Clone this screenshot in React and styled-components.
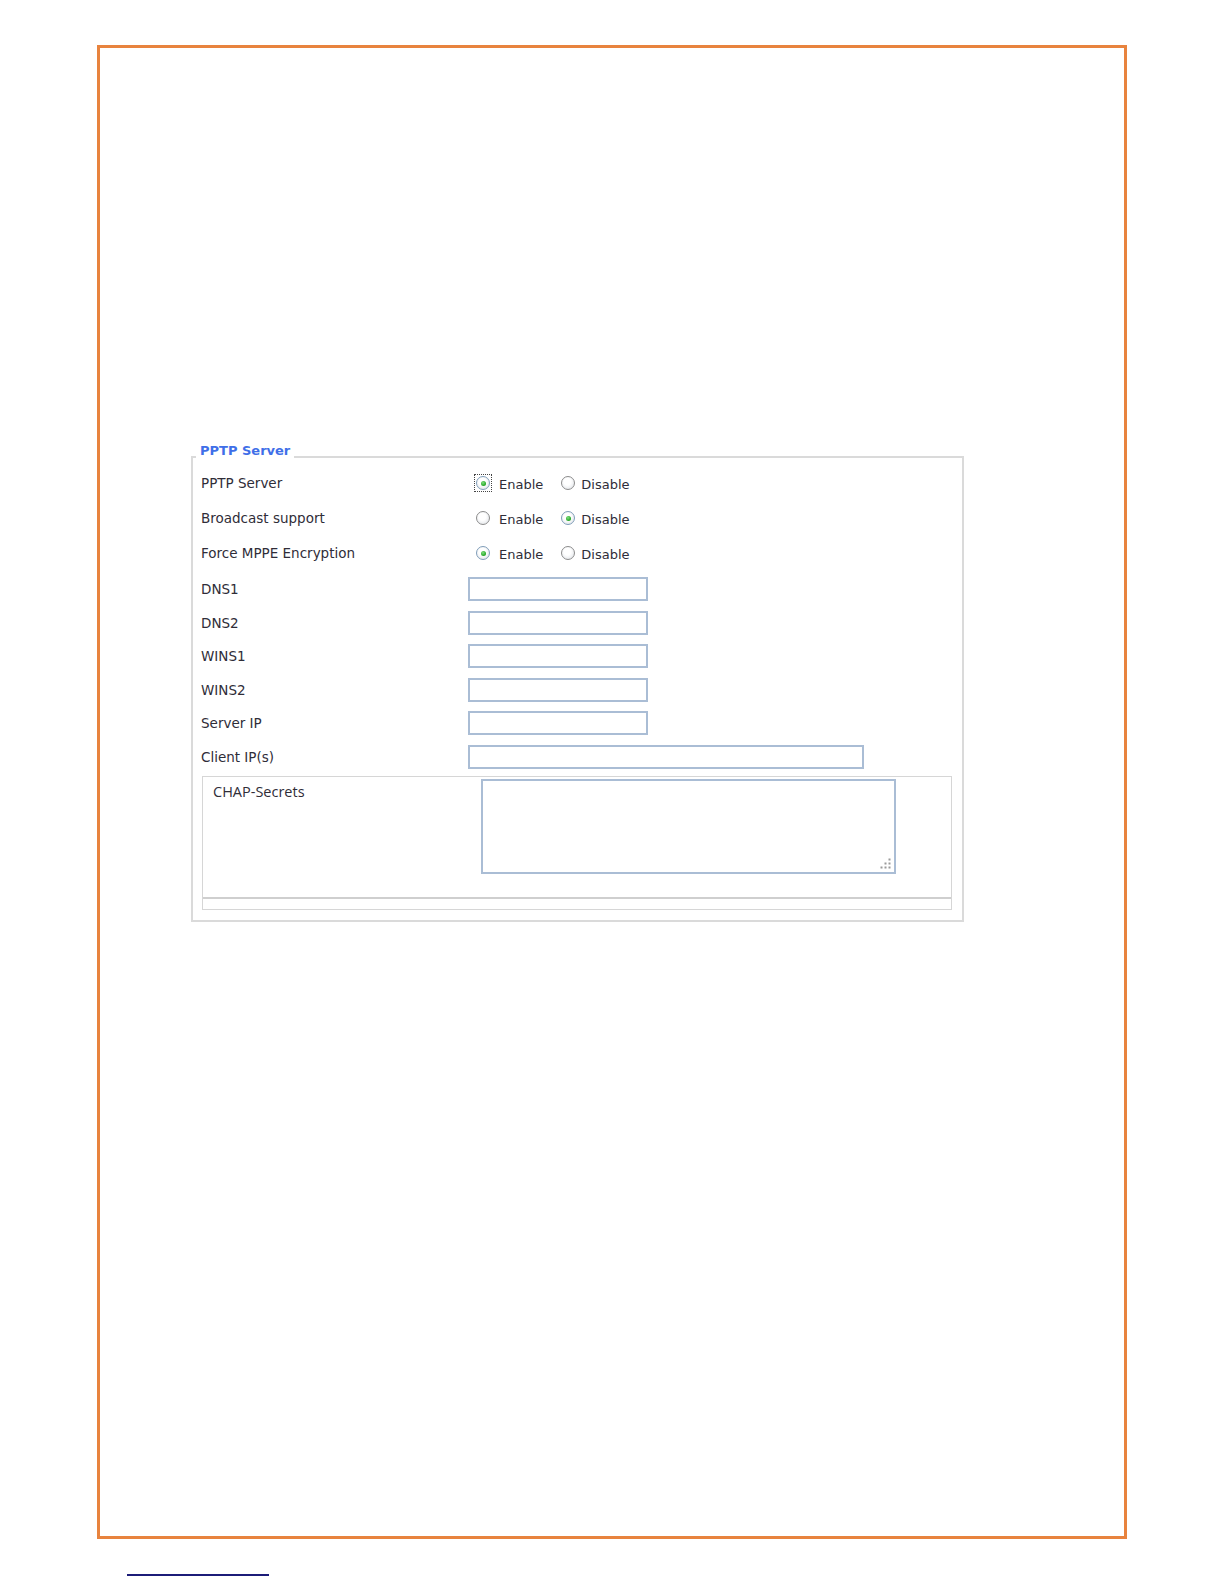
import React from 'react';
import styled, { createGlobalStyle } from 'styled-components';

const Global = createGlobalStyle`
  html, body { margin: 0; padding: 0; background: #fff; }
  body { font-family: "DejaVu Sans", Verdana, sans-serif; }
`;

const Page = styled.div`
  width: 1224px;
  min-height: 1584px;
  box-sizing: border-box;
  padding: 45px 0 0 97px;
  display: flex;
  flex-direction: column;
  background: #fff;
`;

const Frame = styled.div`
  width: 1030px;
  height: 1494px;
  box-sizing: border-box;
  border: 3px solid #e8833e;
  padding: 408px 0 0 91px;
`;

const FooterRule = styled.div`
  width: 142px;
  height: 2px;
  background: #1c1c78;
  margin: 35px 0 0 30px;
`;

const Fieldset = styled.section`
  position: relative;
  width: 773px;
  box-sizing: border-box;
  border: 2px solid #dadada;
  padding: 7.5px 10px 10px 8px;
`;

const Legend = styled.h2`
  position: absolute;
  top: -16px;
  left: 3px;
  margin: 0;
  padding: 0 4px;
  background: #fff;
  font: bold 13px/18px "DejaVu Sans", Verdana, sans-serif;
  color: #3f6fe8;
`;

const Row = styled.div`
  display: grid;
  grid-template-columns: 267px 1fr;
  align-items: center;
  height: ${p => p.$h}px;
  margin-top: ${p => p.$mt || 0}px;
`;

const Label = styled.span`
  font-size: 13.5px;
  color: #2f2d38;
  white-space: nowrap;
`;

const RadioGroup = styled.div`
  display: flex;
  align-items: center;
  gap: 10px;
`;

const Option = styled.label`
  display: inline-flex;
  align-items: center;
  gap: ${p => p.$gap}px;
  padding-left: 8px;
  font-size: 13px;
  color: #2f2d38;
`;

const OptionText = styled.span`
  margin-top: 3px;
`;

const Dot = styled.span`
  position: relative;
  width: 14px;
  height: 14px;
  flex: none;
  outline: ${p => (p.$focus ? '1px dotted #444' : 'none')};
  outline-offset: 1px;
  &::before {
    content: '';
    position: absolute;
    inset: 0;
    box-sizing: border-box;
    border-radius: 50%;
    border: 1px solid ${p => (p.$checked ? '#7f9db9' : '#8c8c8c')};
    background: radial-gradient(circle at 45% 40%, #ffffff 35%, #d9dde2 100%);
  }
  &::after {
    content: '';
    display: ${p => (p.$checked ? 'block' : 'none')};
    position: absolute;
    left: 50%;
    top: 50%;
    width: 5px;
    height: 5px;
    margin: -2.5px 0 0 -2.5px;
    border-radius: 50%;
    background: radial-gradient(circle at 40% 35%, #7fe07f 0%, #21a321 70%);
  }
`;

const TextInput = styled.input`
  width: ${p => p.$w}px;
  height: 24px;
  box-sizing: border-box;
  margin: 0;
  border: 2px solid #aabdd5;
  background: #fff;
  padding: 0 3px;
  font-size: 13px;
`;

const ChapBox = styled.div`
  margin: 2px 0 0 1px;
  width: 750px;
  box-sizing: border-box;
  border: 1px solid #d6d6d6;
`;

const ChapTop = styled.div`
  display: flex;
  align-items: flex-start;
  height: 120.5px;
  box-sizing: border-box;
  padding: 2px 0 0 10px;
`;

const ChapLabel = styled.span`
  width: 268px;
  flex: none;
  margin-top: 3px;
  font: 14.5px/20px "Open Sans", "Noto Sans", sans-serif;
  color: #2f2d38;
`;

const AreaWrap = styled.div`
  position: relative;
  width: 415px;
  height: 95px;
`;

const TextArea = styled.textarea`
  display: block;
  width: 100%;
  height: 100%;
  box-sizing: border-box;
  margin: 0;
  border: 2px solid #aabdd5;
  resize: none;
  background: #fff;
`;

const Grip = styled.svg`
  position: absolute;
  right: 5px;
  bottom: 5px;
`;

const ChapStrip = styled.div`
  border-top: 2px solid #cfcfcf;
  height: 10px;
`;

const radioRows = [
  { label: 'PPTP Server', value: 'enable', focus: true },
  { label: 'Broadcast support', value: 'disable' },
  { label: 'Force MPPE Encryption', value: 'enable' },
];

const inputRows = [
  { label: 'DNS1', w: 180 },
  { label: 'DNS2', w: 180 },
  { label: 'WINS1', w: 180 },
  { label: 'WINS2', w: 180 },
  { label: 'Server IP', w: 180 },
  { label: 'Client IP(s)', w: 396 },
];

export default function App() {
  return (
    <>
      <Global />
      <Page>
        <Frame>
          <Fieldset>
            <Legend>PPTP Server</Legend>
            {radioRows.map(r => (
              <Row key={r.label} $h={35}>
                <Label>{r.label}</Label>
                <RadioGroup>
                  <Option $gap={9}>
                    <Dot $checked={r.value === 'enable'} $focus={r.focus} />
                    <OptionText>Enable</OptionText>
                  </Option>
                  <Option $gap={6}>
                    <Dot $checked={r.value === 'disable'} />
                    <OptionText>Disable</OptionText>
                  </Option>
                </RadioGroup>
              </Row>
            ))}
            {inputRows.map((r, i) => (
              <Row key={r.label} $h={33.5} $mt={i === 0 ? 2 : 0}>
                <Label>{r.label}</Label>
                <TextInput $w={r.w} type="text" />
              </Row>
            ))}
            <ChapBox>
              <ChapTop>
                <ChapLabel>CHAP-Secrets</ChapLabel>
                <AreaWrap>
                  <TextArea />
                  <Grip width="11" height="11" viewBox="0 0 11 11">
                    <g fill="#9a9a9a">
                      <rect x="8.5" y="0.5" width="2" height="2" />
                      <rect x="4.5" y="4.5" width="2" height="2" />
                      <rect x="8.5" y="4.5" width="2" height="2" />
                      <rect x="0.5" y="8.5" width="2" height="2" />
                      <rect x="4.5" y="8.5" width="2" height="2" />
                      <rect x="8.5" y="8.5" width="2" height="2" />
                    </g>
                  </Grip>
                </AreaWrap>
              </ChapTop>
              <ChapStrip />
            </ChapBox>
          </Fieldset>
        </Frame>
        <FooterRule />
      </Page>
    </>
  );
}
